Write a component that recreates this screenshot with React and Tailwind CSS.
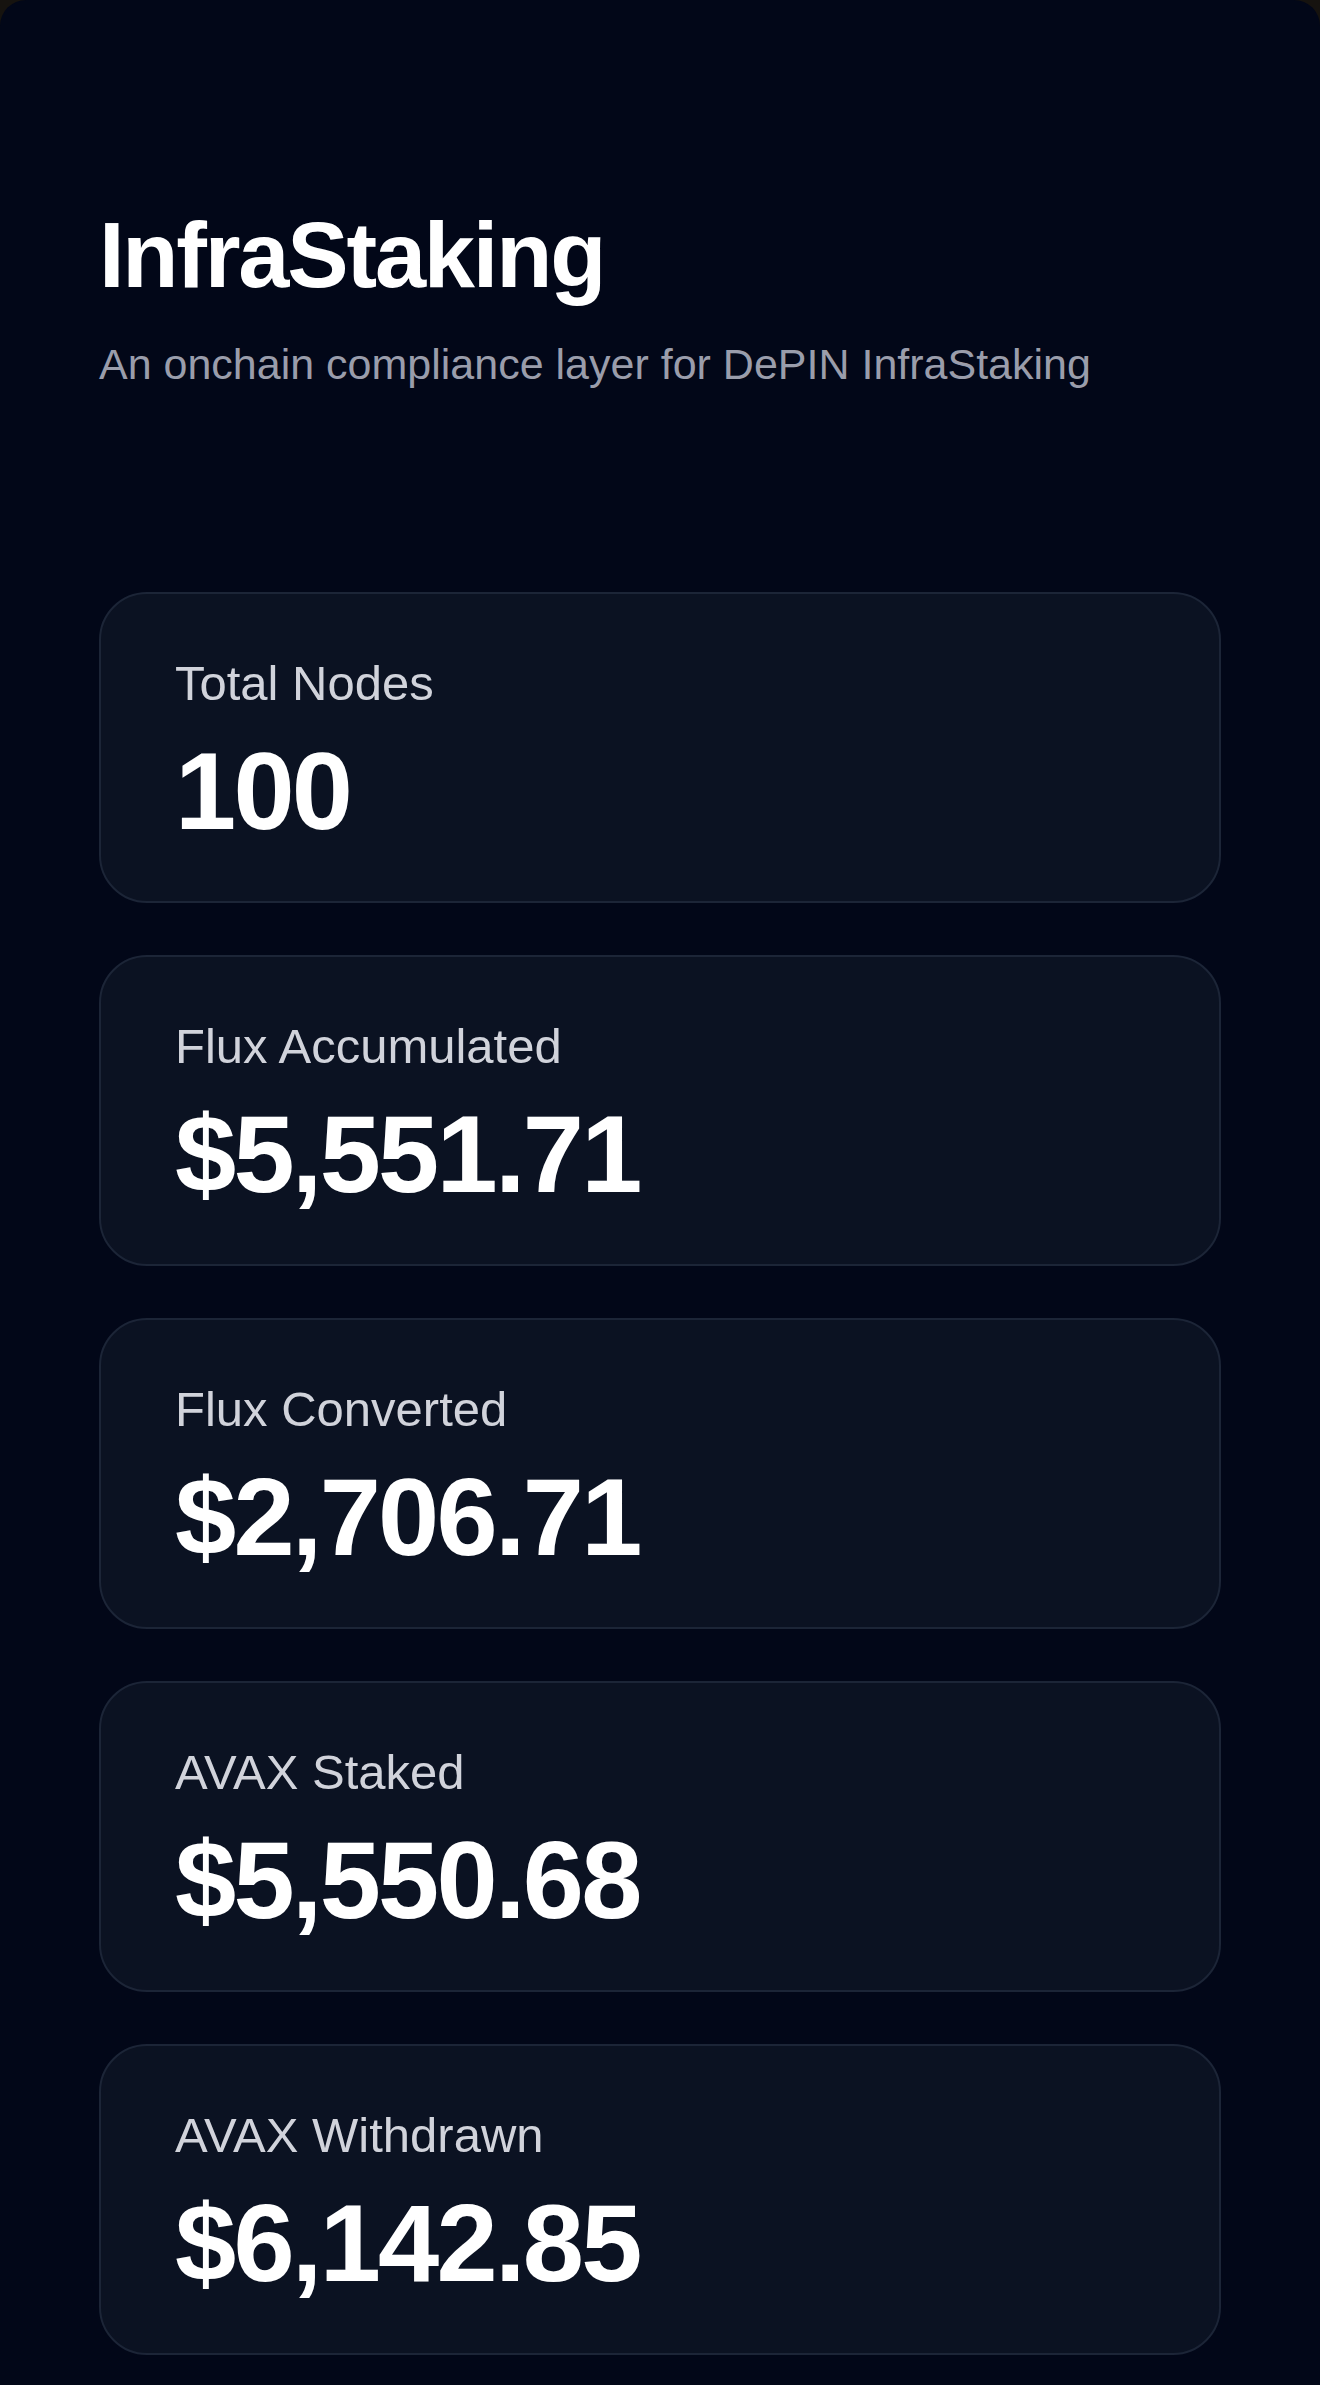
import React from "react";

const stats = [
  { label: "Total Nodes", value: "100" },
  { label: "Flux Accumulated", value: "$5,551.71" },
  { label: "Flux Converted", value: "$2,706.71" },
  { label: "AVAX Staked", value: "$5,550.68" },
  { label: "AVAX Withdrawn", value: "$6,142.85" },
];

function StatCard({ label, value }) {
  return (
    <div className="rounded-[48px] border-2 border-[#1c2537] bg-[#0b1222] pl-[74px] pr-[74px] pt-[59px] pb-[55px]">
      <div className="text-[49px] leading-[60px] text-[#d1d3db]">{label}</div>
      <div className="mt-[23px] text-[110px] leading-[110px] font-bold tracking-[-0.025em] text-white">
        {value}
      </div>
    </div>
  );
}

export default function App() {
  return (
    <div
      className="min-h-[2385px] w-[1320px] bg-[#16130f]"
      style={{ fontFamily: '"Liberation Sans", Arial, Helvetica, sans-serif' }}
    >
      <div className="min-h-[2385px] rounded-t-[26px] bg-[#020718] px-[99px] pt-[209px] pb-[40px]">
        <h1 className="text-[92px] leading-[92px] font-bold tracking-[-0.024em] text-white">
          InfraStaking
        </h1>
        <p className="mt-[32px] text-[43px] leading-[63px] text-[#9a9dab]">
          An onchain compliance layer for DePIN InfraStaking
        </p>
        <div className="mt-[196px] flex flex-col gap-[52px]">
          {stats.map((s) => (
            <StatCard key={s.label} label={s.label} value={s.value} />
          ))}
        </div>
      </div>
    </div>
  );
}
